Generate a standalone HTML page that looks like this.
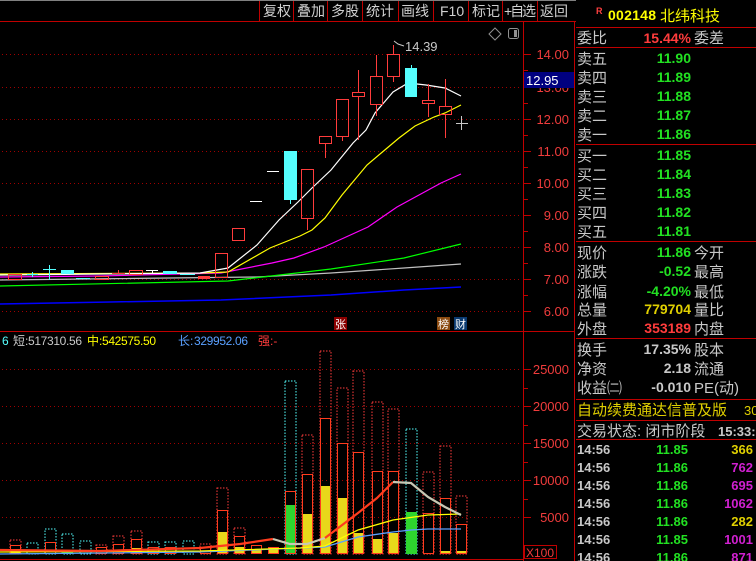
<!DOCTYPE html>
<html><head><meta charset="utf-8"><style>
html,body{margin:0;padding:0;background:#000;width:756px;height:561px;overflow:hidden}
svg{display:block}
text{font-family:"Liberation Sans","Noto Sans CJK SC",sans-serif}
</style></head><body>
<svg width="756" height="561" viewBox="0 0 756 561" xmlns="http://www.w3.org/2000/svg">
<rect width="756" height="561" fill="#000"/>
<!-- top bar -->
<line x1="0" y1="0.5" x2="576" y2="0.5" stroke="#808080"/>
<line x1="0" y1="21.5" x2="576" y2="21.5" stroke="#c00000"/>
<g stroke="#c00000">
<line x1="259.5" y1="1" x2="259.5" y2="21"/><line x1="293.5" y1="1" x2="293.5" y2="21"/><line x1="327.5" y1="1" x2="327.5" y2="21"/><line x1="362.5" y1="1" x2="362.5" y2="21"/><line x1="398.5" y1="1" x2="398.5" y2="21"/><line x1="433.5" y1="1" x2="433.5" y2="21"/><line x1="468.5" y1="1" x2="468.5" y2="21"/><line x1="502.5" y1="1" x2="502.5" y2="21"/><line x1="537.5" y1="1" x2="537.5" y2="21"/>
</g>
<g fill="#d0d0d0" font-size="14">
<text x="263" y="16">复权</text><text x="297" y="16">叠加</text><text x="331" y="16">多股</text><text x="366" y="16">统计</text><text x="401" y="16">画线</text><text x="440" y="16">F10</text><text x="472" y="16">标记</text><text x="504" y="16" textLength="32">+自选</text><text x="540" y="16">返回</text>
</g>
<!-- axes -->
<line x1="523.5" y1="22" x2="523.5" y2="561" stroke="#c00000"/>
<line x1="574.5" y1="22" x2="574.5" y2="561" stroke="#c00000"/>
<line x1="0" y1="331.5" x2="575" y2="331.5" stroke="#c00000"/>
<line x1="0" y1="559.5" x2="524" y2="559.5" stroke="#c00000"/>
<!-- icons -->
<path d="M495 28 L501 34 L495 40 L489 34 Z" fill="none" stroke="#909090"/>
<rect x="508.5" y="28.5" width="10" height="10" rx="2" fill="none" stroke="#909090"/>
<rect x="514" y="30" width="3" height="7" fill="#909090"/>
<!-- price grid -->
<g stroke="#a00000" stroke-dasharray="1,3">
<line x1="2" y1="54.5" x2="522" y2="54.5"/><line x1="2" y1="87.5" x2="522" y2="87.5"/><line x1="2" y1="119.5" x2="522" y2="119.5"/><line x1="2" y1="151.5" x2="522" y2="151.5"/><line x1="2" y1="183.5" x2="522" y2="183.5"/><line x1="2" y1="215.5" x2="522" y2="215.5"/><line x1="2" y1="247.5" x2="522" y2="247.5"/><line x1="2" y1="279.5" x2="522" y2="279.5"/><line x1="2" y1="311.5" x2="522" y2="311.5"/>
<line x1="2" y1="369.5" x2="522" y2="369.5"/><line x1="2" y1="406.5" x2="522" y2="406.5"/><line x1="2" y1="443.5" x2="522" y2="443.5"/><line x1="2" y1="480.5" x2="522" y2="480.5"/><line x1="2" y1="517.5" x2="522" y2="517.5"/>
</g>
<g stroke="#c00000">
<line x1="524" y1="54.5" x2="531" y2="54.5"/><line x1="524" y1="70.5" x2="528" y2="70.5"/><line x1="524" y1="103.5" x2="528" y2="103.5"/><line x1="524" y1="119.5" x2="531" y2="119.5"/><line x1="524" y1="135.5" x2="528" y2="135.5"/><line x1="524" y1="151.5" x2="531" y2="151.5"/><line x1="524" y1="167.5" x2="528" y2="167.5"/><line x1="524" y1="183.5" x2="531" y2="183.5"/><line x1="524" y1="199.5" x2="528" y2="199.5"/><line x1="524" y1="215.5" x2="531" y2="215.5"/><line x1="524" y1="231.5" x2="528" y2="231.5"/><line x1="524" y1="247.5" x2="531" y2="247.5"/><line x1="524" y1="263.5" x2="528" y2="263.5"/><line x1="524" y1="279.5" x2="531" y2="279.5"/><line x1="524" y1="295.5" x2="528" y2="295.5"/><line x1="524" y1="311.5" x2="531" y2="311.5"/>
<line x1="524" y1="369.5" x2="531" y2="369.5"/><line x1="524" y1="388.5" x2="528" y2="388.5"/><line x1="524" y1="406.5" x2="531" y2="406.5"/><line x1="524" y1="425.5" x2="528" y2="425.5"/><line x1="524" y1="443.5" x2="531" y2="443.5"/><line x1="524" y1="462.5" x2="528" y2="462.5"/><line x1="524" y1="480.5" x2="531" y2="480.5"/><line x1="524" y1="499.5" x2="528" y2="499.5"/><line x1="524" y1="517.5" x2="531" y2="517.5"/>
</g>
<g fill="#f03c3c" font-size="13" text-anchor="end">
<text x="569" y="59">14.00</text><text x="569" y="92">13.00</text><text x="569" y="124">12.00</text><text x="569" y="156">11.00</text><text x="569" y="188">10.00</text><text x="569" y="220">9.00</text><text x="569" y="252">8.00</text><text x="569" y="284">7.00</text><text x="569" y="316">6.00</text>
<text x="569" y="374">25000</text><text x="569" y="411">20000</text><text x="569" y="448">15000</text><text x="569" y="485">10000</text><text x="569" y="522">5000</text>
</g>
<rect x="524" y="72" width="50" height="16" fill="#000080"/>
<text x="526" y="85" fill="#fff" font-size="13">12.95</text>
<rect x="524.5" y="545.5" width="32" height="13" fill="none" stroke="#c00000"/>
<text x="526" y="557" fill="#f03c3c" font-size="12">X100</text>

<!-- MAs -->
<g fill="none" stroke-width="1.2">
<polyline stroke="#0000ff" stroke-width="1.5" points="0,304 110,302 221,300 331,295 404,290 461,287"/>
<polyline stroke="#c0c0c0" points="0,280 257,277 331,273 404,268 461,264"/>
<polyline stroke="#00ff00" points="0,286 228,281 331,269 404,258 461,244"/>
<polyline stroke="#ff00ff" points="0,277 100,276 221,273 272,263 294,258 324,247 368,227 397,207 441,183 461,174"/>
<polyline stroke="#ffff00" points="0,274 200,273 228,272 270,248 300,236 312,230 325,218 342,195 367,165 399,138 415,126 434,117 445,113 461,105"/>
<polyline stroke="#ffffff" points="0,275 200,273 228,268 257,245 279,220 298,202 312,188 331,170 353,143 366,130 375,113 393,92 408,83 426,85 445,88 461,96"/>
</g>
<!-- small candles -->
<g stroke="#ff3c3c" fill="none">
<rect x="8.5" y="274.5" width="13" height="5"/><rect x="95.5" y="276.5" width="13" height="3"/><line x1="112" y1="273.5" x2="125" y2="273.5"/><line x1="118.5" y1="270" x2="118.5" y2="273"/><rect x="129.5" y="270.5" width="13" height="4"/>
</g>
<g stroke="#55ffff" fill="none">
<line x1="27" y1="274.5" x2="38" y2="274.5"/><line x1="32.5" y1="272" x2="32.5" y2="277"/><line x1="43" y1="269.5" x2="56" y2="269.5"/><line x1="49.5" y1="265" x2="49.5" y2="280"/><line x1="76" y1="278.5" x2="90" y2="278.5"/><line x1="180" y1="274.5" x2="195" y2="274.5"/>
</g>
<rect x="61" y="270" width="13" height="4" fill="#55ffff"/>
<rect x="163" y="271" width="14" height="3" fill="#55ffff"/>
<line x1="146" y1="270.5" x2="158" y2="270.5" stroke="#fff"/><line x1="152.5" y1="270" x2="152.5" y2="274" stroke="#fff"/>
<rect x="198" y="276" width="12" height="3" fill="#ff3c3c"/>
<!-- big candles -->
<g stroke="#ff3c3c" fill="none">
<rect x="215.5" y="253.5" width="12" height="24"/>
<rect x="232.5" y="228.5" width="12" height="12"/>
<rect x="301.5" y="169.5" width="12" height="49"/><line x1="307.5" y1="219" x2="307.5" y2="230"/>
<rect x="319.5" y="136.5" width="12" height="7"/><line x1="325.5" y1="144" x2="325.5" y2="158"/>
<rect x="336.5" y="99.5" width="12" height="37"/><line x1="342.5" y1="137" x2="342.5" y2="141"/>
<rect x="352.5" y="92.5" width="12" height="4"/><line x1="358.5" y1="70" x2="358.5" y2="92"/><line x1="358.5" y1="97" x2="358.5" y2="140"/>
<rect x="370.5" y="76.5" width="12" height="28"/><line x1="376.5" y1="55" x2="376.5" y2="76"/><line x1="376.5" y1="105" x2="376.5" y2="116"/>
<rect x="387.5" y="54.5" width="12" height="22"/><line x1="393.5" y1="45" x2="393.5" y2="54"/><line x1="393.5" y1="77" x2="393.5" y2="82"/>
<rect x="422.5" y="100.5" width="12" height="3"/><line x1="428.5" y1="84" x2="428.5" y2="100"/><line x1="428.5" y1="104" x2="428.5" y2="117"/>
<rect x="439.5" y="106.5" width="12" height="8"/><line x1="445.5" y1="79" x2="445.5" y2="106"/><line x1="445.5" y1="115" x2="445.5" y2="138"/>
</g>
<g stroke="#c8c8c8" fill="none"><line x1="456" y1="123.5" x2="468" y2="123.5"/><line x1="461.5" y1="116" x2="461.5" y2="130"/></g>
<line x1="250" y1="201.5" x2="262" y2="201.5" stroke="#fff"/>
<line x1="267" y1="171.5" x2="279" y2="171.5" stroke="#fff"/>
<rect x="284" y="151" width="13" height="49" fill="#55ffff"/><line x1="290.5" y1="200" x2="290.5" y2="204" stroke="#55ffff"/>
<rect x="405" y="68" width="12" height="29" fill="#55ffff"/><line x1="411.5" y1="65" x2="411.5" y2="68" stroke="#55ffff"/>
<polyline points="394,41 398,44 404,46" fill="none" stroke="#c8c8c8"/>
<text x="405" y="51" fill="#c8c8c8" font-size="13">14.39</text>
<!-- badges -->
<rect x="334" y="317" width="13" height="13" fill="#8b0000"/><text x="335" y="328" fill="#fff" font-size="11">张</text>
<rect x="437" y="317" width="13" height="13" fill="#8b4a10"/><text x="438" y="328" fill="#fff" font-size="11">榜</text>
<rect x="454" y="317" width="13" height="13" fill="#0a3a70"/><text x="455" y="328" fill="#fff" font-size="11">财</text>
<!-- volume legend -->
<g font-size="12">
<text x="2" y="345" fill="#55ffff">6</text>
<text x="13" y="345" fill="#c8c8c8">短:</text><text x="28" y="345" fill="#c8c8c8" textLength="54">517310.56</text>
<text x="87" y="345" fill="#ffff00">中:</text><text x="102" y="345" fill="#ffff00" textLength="54">542575.50</text>
<text x="178" y="345" fill="#5aa0ff">长:</text><text x="194" y="345" fill="#5aa0ff" textLength="54">329952.06</text>
<text x="258" y="345" fill="#ff3c3c">强:-</text>
</g>
<!-- volume bars: dotted outer -->
<g fill="none" stroke-dasharray="1.5,1.5">
<g stroke="#ff3c3c">
<rect x="456" y="496" width="11" height="58"/><rect x="440" y="446" width="11" height="108"/><rect x="423" y="472" width="11" height="82"/>
<rect x="388" y="409" width="11" height="145"/><rect x="372" y="402" width="11" height="152"/><rect x="353" y="371" width="11" height="183"/><rect x="337" y="388" width="11" height="166"/><rect x="320" y="351" width="11" height="203"/><rect x="302" y="435" width="11" height="119"/>
<rect x="234" y="528" width="11" height="26"/><rect x="217" y="488" width="11" height="66"/><rect x="200" y="544" width="11" height="10"/>
<rect x="131" y="531" width="11" height="23"/><rect x="113" y="536" width="11" height="18"/><rect x="96" y="545" width="11" height="9"/><rect x="10" y="540" width="11" height="14"/>
</g>
<g stroke="#55ffff">
<rect x="406" y="429" width="11" height="125"/><rect x="285" y="381" width="11" height="173"/>
<rect x="183" y="541" width="11" height="13"/><rect x="165" y="542" width="11" height="12"/><rect x="148" y="542" width="11" height="12"/><rect x="80" y="541" width="11" height="13"/><rect x="62" y="534" width="11" height="20"/><rect x="45" y="529" width="11" height="25"/><rect x="27" y="543" width="11" height="11"/>
</g>
</g>
<!-- fills -->
<g fill="#e8d81a">
<rect x="456" y="551" width="11" height="3"/><rect x="440" y="551" width="11" height="3"/>
<rect x="388" y="533" width="11" height="21"/><rect x="372" y="539" width="11" height="15"/><rect x="353" y="533" width="11" height="21"/><rect x="337" y="498" width="11" height="56"/><rect x="320" y="486" width="11" height="68"/><rect x="302" y="514" width="11" height="40"/>
<rect x="268" y="548" width="11" height="6"/><rect x="251" y="549" width="11" height="5"/><rect x="234" y="547" width="11" height="7"/><rect x="217" y="532" width="11" height="22"/>
<rect x="131" y="548" width="11" height="6"/><rect x="10" y="549" width="11" height="5"/>
</g>
<g fill="#2ed52e">
<rect x="406" y="512" width="11" height="42"/><rect x="285" y="505" width="11" height="49"/><rect x="62" y="550" width="11" height="4"/>
</g>
<!-- solid red outlines -->
<g fill="none" stroke="#ff3c1e">
<rect x="456.5" y="524.5" width="10" height="29"/><rect x="440.5" y="498.5" width="10" height="55"/><rect x="423.5" y="513.5" width="10" height="40"/>
<rect x="388.5" y="471.5" width="10" height="82"/><rect x="372.5" y="471.5" width="10" height="82"/><rect x="353.5" y="452.5" width="10" height="101"/><rect x="337.5" y="443.5" width="10" height="110"/><rect x="320.5" y="418.5" width="10" height="135"/><rect x="302.5" y="474.5" width="10" height="79"/><rect x="285.5" y="491.5" width="10" height="62"/>
<rect x="268.5" y="547.5" width="10" height="6"/><rect x="251.5" y="545.5" width="10" height="8"/><rect x="234.5" y="536.5" width="10" height="17"/><rect x="217.5" y="510.5" width="10" height="43"/>
<rect x="200.5" y="547.5" width="10" height="6"/><rect x="165.5" y="547.5" width="10" height="6"/><rect x="148.5" y="547.5" width="10" height="6"/><rect x="131.5" y="539.5" width="10" height="14"/><rect x="113.5" y="544.5" width="10" height="9"/><rect x="96.5" y="547.5" width="10" height="6"/><rect x="45.5" y="542.5" width="10" height="11"/><rect x="10.5" y="545.5" width="10" height="8"/>
</g>
<!-- volume MAs -->
<g fill="none">
<polyline stroke="#5aa0ff" stroke-width="1.3" points="0,554 200,552 300,548 325,547 358,537 393,532 411,530 428,529 461,529"/>
<polyline stroke="#ffff00" stroke-width="1.3" points="0,552 200,551 300,548 325,546 358,530 393,520 428,515 461,514"/>
<polyline stroke="#ff3c1e" stroke-width="2.2" points="0,550 100,551 200,548 240,544 273,539"/>
<polyline stroke="#c8c8b4" stroke-width="2.2" points="273,539 290,544 307,544 325,538"/>
<polyline stroke="#ff3c1e" stroke-width="2.2" points="325,538 358,513 377,498 393,482"/>
<polyline stroke="#c8c8b4" stroke-width="2.2" points="393,482 411,483 428,497 445,507 461,515"/>
</g>

<!-- right panel -->
<g stroke="#c00000">
<line x1="576" y1="27.5" x2="756" y2="27.5"/><line x1="576" y1="47.5" x2="756" y2="47.5"/><line x1="576" y1="144.5" x2="756" y2="144.5"/><line x1="576" y1="241.5" x2="756" y2="241.5"/><line x1="576" y1="338.5" x2="756" y2="338.5"/><line x1="576" y1="399.5" x2="756" y2="399.5"/><line x1="576" y1="420.5" x2="756" y2="420.5"/><line x1="576" y1="439.5" x2="756" y2="439.5"/>
</g>
<text x="596" y="14" fill="#ff4040" font-size="9" font-weight="bold">R</text>
<text x="608" y="20" fill="#ffff00" font-size="14" font-weight="bold" textLength="48">002148</text>
<text x="660" y="21" fill="#ffff00" font-size="15">北纬科技</text>
<g font-size="15" fill="#c8c8c8">
<text x="577" y="43">委比</text><text x="694" y="43">委差</text>
<text x="577" y="64">卖五</text><text x="577" y="83">卖四</text><text x="577" y="102">卖三</text><text x="577" y="121">卖二</text><text x="577" y="140">卖一</text>
<text x="577" y="161">买一</text><text x="577" y="180">买二</text><text x="577" y="199">买三</text><text x="577" y="218">买四</text><text x="577" y="237">买五</text>
<text x="577" y="258">现价</text><text x="694" y="258">今开</text><text x="577" y="277">涨跌</text><text x="694" y="277">最高</text><text x="577" y="297">涨幅</text><text x="694" y="297">最低</text><text x="577" y="315">总量</text><text x="694" y="315">量比</text><text x="577" y="334">外盘</text><text x="694" y="334">内盘</text>
<text x="577" y="355">换手</text><text x="694" y="355">股本</text><text x="577" y="374">净资</text><text x="694" y="374">流通</text><text x="577" y="393">收益㈡</text><text x="694" y="393">PE(动)</text>
<text x="577" y="436">交易状态: 闭市阶段</text>
</g>
<text x="577" y="415" fill="#e0d000" font-size="15">自动续费通达信普及版</text>
<text x="744" y="415" fill="#e0d000" font-size="13">30</text>
<text x="718" y="436" fill="#c8c8c8" font-size="13" font-weight="bold">15:33:</text>
<g font-size="14" font-weight="bold" text-anchor="end">
<text x="691" y="43" fill="#ff3c3c">15.44%</text>
<g fill="#22e022">
<text x="691" y="63">11.90</text><text x="691" y="82">11.89</text><text x="691" y="101">11.88</text><text x="691" y="120">11.87</text><text x="691" y="139">11.86</text>
<text x="691" y="160">11.85</text><text x="691" y="179">11.84</text><text x="691" y="198">11.83</text><text x="691" y="217">11.82</text><text x="691" y="236">11.81</text>
<text x="691" y="257">11.86</text><text x="691" y="276">-0.52</text><text x="691" y="296">-4.20%</text>
</g>
<text x="691" y="314" fill="#e0d000">779704</text><text x="691" y="333" fill="#ff3c3c">353189</text>
<g fill="#c8c8c8"><text x="691" y="354">17.35%</text><text x="691" y="373">2.18</text><text x="691" y="392">-0.010</text></g>
</g>
<g font-size="13" font-weight="bold">
<g fill="#c8c8c8"><text x="577" y="454">14:56</text><text x="577" y="472">14:56</text><text x="577" y="490">14:56</text><text x="577" y="508">14:56</text><text x="577" y="526">14:56</text><text x="577" y="544">14:56</text><text x="577" y="562">14:56</text></g>
<g fill="#22e022" text-anchor="end"><text x="688" y="454">11.85</text><text x="688" y="472">11.86</text><text x="688" y="490">11.86</text><text x="688" y="508">11.86</text><text x="688" y="526">11.86</text><text x="688" y="544">11.85</text><text x="688" y="562">11.86</text></g>
<g text-anchor="end"><text x="753" y="454" fill="#e0d000">366</text><text x="753" y="472" fill="#d020d0">762</text><text x="753" y="490" fill="#d020d0">695</text><text x="753" y="508" fill="#d020d0">1062</text><text x="753" y="526" fill="#e0d000">282</text><text x="753" y="544" fill="#d020d0">1001</text><text x="753" y="562" fill="#d020d0">871</text></g>
</g>
</svg>
</body></html>
